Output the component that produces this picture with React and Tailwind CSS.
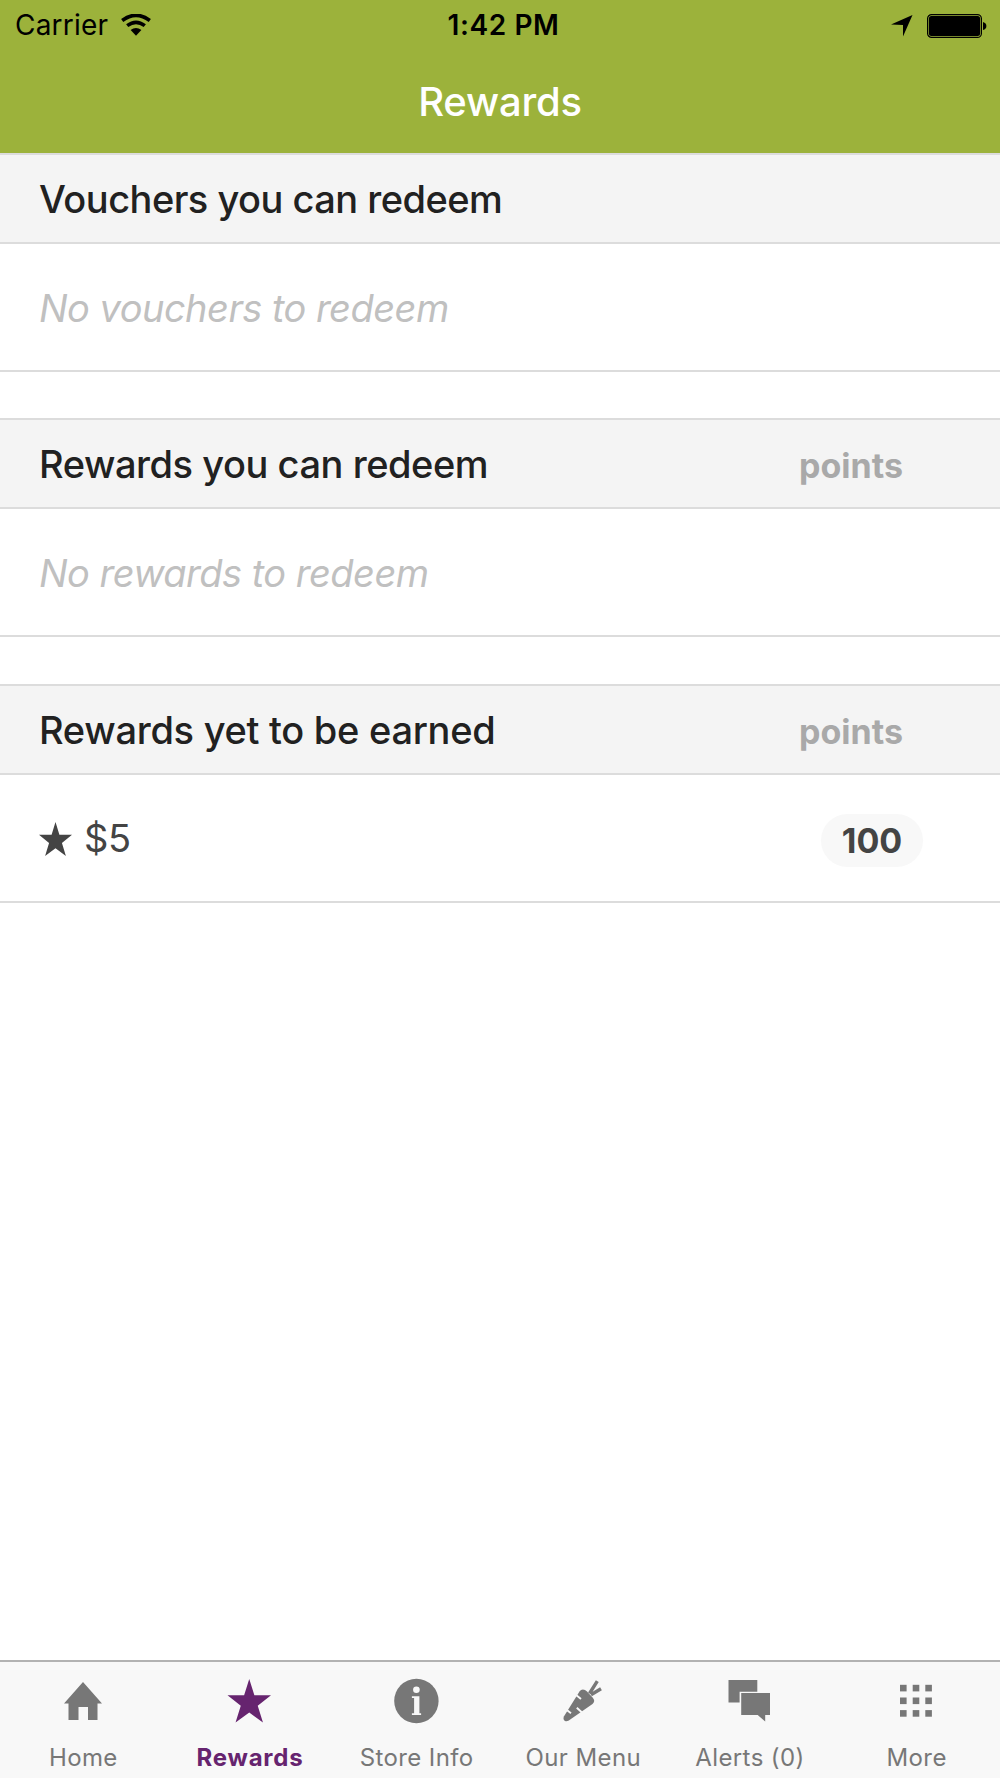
const STAR = "M50 0L61.8 37.5H100L69.5 61.5L81.5 100L50 77L18.5 100L30.5 61.5L0 37.5H38.2Z";

function Star({ className }) {
  return (
    <svg viewBox="0 0 100 100" preserveAspectRatio="none" className={className} fill="currentColor">
      <path d={STAR} />
    </svg>
  );
}

function StatusBar() {
  return (
    <div className="grid h-[50px] grid-cols-3 items-center text-black">
      <div className="flex items-center pl-[15px]">
        <span className="text-[28px] leading-[51px] tracking-[0.2px]">Carrier</span>
        <svg viewBox="0 0 30 22" className="mb-[2px] ml-[13px] h-[22px] w-[30px]">
          <path d="M1.2 6.5Q15 -3.9 28.8 6.5M6.2 11.7Q15 4.9 23.8 11.7" fill="none" stroke="#000" strokeWidth="3.6" />
          <path d="M9.6 16Q15 11.9 20.4 16L15 21.8Z" />
        </svg>
      </div>
      <div className="pl-[7px] text-center text-[28px] leading-[51px] font-semibold tracking-[0.6px]">1:42 PM</div>
      <div className="flex items-center justify-end pr-[13px]">
        <svg viewBox="0 0 22 22" className="mr-[14px] h-[22px] w-[22px]">
          <path d="M0 9.5L21.5 0L12 21.5V10Z" />
        </svg>
        <svg viewBox="0 0 60 24" className="h-[24px] w-[60px]">
          <rect x="0.6" y="0.6" width="53.8" height="22.8" rx="4" fill="none" stroke="#000" strokeWidth="1.2" />
          <rect x="1.9" y="1.9" width="51.2" height="20.2" rx="2.5" />
          <path d="M56 8Q59.4 9 59.4 12T56 16Z" />
        </svg>
      </div>
    </div>
  );
}

function Section({ title, titleClass, points, children }) {
  return (
    <section>
      <div className="flex h-[91px] items-center justify-between border-y-2 border-[#dcdcdc] bg-[#f4f4f4] pr-[97px] pl-[39px]">
        <h2 className={titleClass}>{title}</h2>
        {points && <span className="pt-[3px] text-[34px] font-bold text-[#a9a9a9]">points</span>}
      </div>
      <div className="flex h-[128px] items-center justify-between border-b-2 border-[#dcdcdc] pr-[77px] pl-[39px]">
        {children}
      </div>
    </section>
  );
}

function Empty({ children }) {
  return <p className="pt-[2px] text-[38px] tracking-[-0.52px] text-[#c0c0c0] italic">{children}</p>;
}

const TABS = [
  {
    label: "Home",
    icon: <path d="M25 9L44 30.5H39.5V47H30V34H20.5V47H10.5V30.5H6Z" />,
  },
  {
    label: "Rewards",
    active: true,
    icon: <path d={STAR} transform="translate(2.5 6) scale(.435)" />,
  },
  {
    label: "Store Info",
    icon: (
      <>
        <circle cx="24.4" cy="28" r="22.2" />
        <circle cx="24.4" cy="16.8" r="3.3" fill="#f8f8f8" />
        <path d="M19.9 23.2H27.4V40.2H29.1V42H19.9V40.2H22.1V25H19.9Z" fill="#f8f8f8" />
      </>
    ),
  },
  {
    label: "Our Menu",
    icon: (
      <>
        <path d="M21.5 18.5C23.2 15.8 26.5 15.8 29 18.5L34.8 24.8C36.8 27 36.6 29.2 34.5 31L10.8 47.5C7.3 49.7 4.3 47 6 43.3Z" />
        <path d="M31.5 20.5L39.3 8.2M33 21.8L43 15.8" fill="none" stroke="currentColor" strokeWidth="3.4" />
        <path d="M17.5 21.5L23 26M8.5 36.8L13 40.3M18.8 34.7L24 39.5" stroke="#f8f8f8" strokeWidth="1.9" />
      </>
    ),
  },
  {
    label: "Alerts (0)",
    icon: (
      <>
        <path d="M3.5 7H32.3V18.7H14.6V29.5H3.5Z" />
        <path d="M16.2 20H45V42H40.2V48.5L32.7 42H16.2Z" />
      </>
    ),
  },
  {
    label: "More",
    icon: [11.8, 24.5, 37.1].map((y) =>
      [8, 20.7, 33.3].map((x) => <rect key={`${x}-${y}`} x={x} y={y} width="6.6" height="6.6" />)
    ),
  },
];

function TabBar() {
  return (
    <nav className="grid h-[118px] grid-cols-6 border-t-2 border-[#b2b2b2] bg-[#f8f8f8]">
      {TABS.map((tab) => (
        <div
          key={tab.label}
          className={
            tab.active
              ? "flex flex-col items-center pt-[11px] font-bold tracking-[0.8px] text-[#66246f]"
              : "flex flex-col items-center pt-[11px] tracking-[0.4px] text-[#777]"
          }
        >
          <svg viewBox="0 0 50 56" className="h-[56px] w-[50px]" fill="currentColor">
            {tab.icon}
          </svg>
          <span className="mt-[13px] text-[24px] leading-[32px] whitespace-nowrap">{tab.label}</span>
        </div>
      ))}
    </nav>
  );
}

export default function App() {
  return (
    <div className="flex h-[1778px] w-[1000px] flex-col bg-white font-[Inter,sans-serif]">
      <header className="h-[153px] shrink-0 bg-[#9cb23b]">
        <StatusBar />
        <h1 className="text-center text-[40px] leading-[104px] font-medium tracking-[-0.2px] text-white">Rewards</h1>
      </header>
      <main className="grow">
        <Section
          title="Vouchers you can redeem"
          titleClass="pt-[2px] text-[38px] font-medium tracking-[-0.52px] text-[#212121]"
        >
          <Empty>No vouchers to redeem</Empty>
        </Section>
        <div className="h-[46px]" />
        <Section
          title="Rewards you can redeem"
          titleClass="pt-[1px] text-[38px] font-medium tracking-[-0.45px] text-[#212121]"
          points
        >
          <Empty>No rewards to redeem</Empty>
        </Section>
        <div className="h-[47px]" />
        <Section
          title="Rewards yet to be earned"
          titleClass="pt-[1px] text-[38px] font-medium tracking-[-0.28px] text-[#212121]"
          points
        >
          <div className="flex items-center pt-[1px] text-[38px] text-[#444]">
            <Star className="mr-[12px] h-[34px] w-[33px]" />
            <span className="tracking-[-0.3px]">$5</span>
          </div>
          <span className="mt-[4px] flex h-[53px] w-[102px] items-center justify-center rounded-full bg-[#f8f8f8] text-[34px] font-bold text-[#444]">
            100
          </span>
        </Section>
      </main>
      <TabBar />
    </div>
  );
}
